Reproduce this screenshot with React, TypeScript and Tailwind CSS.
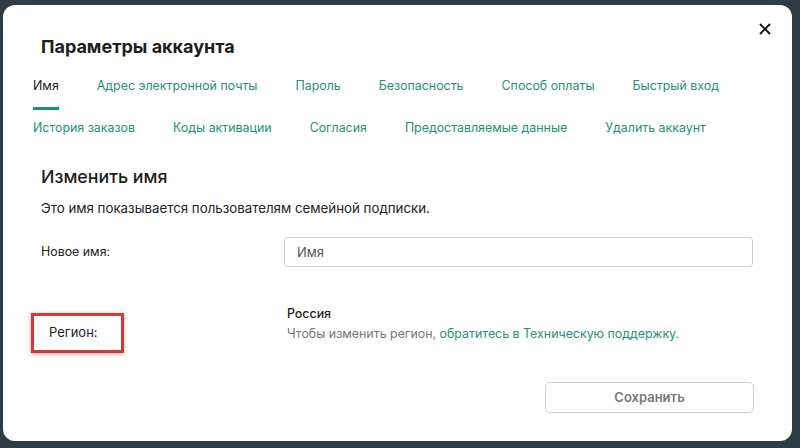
import { X } from "lucide-react";

const ROW_ONE = ["Имя", "Адрес электронной почты", "Пароль", "Безопасность", "Способ оплаты", "Быстрый вход"];
const ROW_TWO = ["История заказов", "Коды активации", "Согласия", "Предоставляемые данные", "Удалить аккаунт"];

function Tab({ label, active }: { label: string; active?: boolean }) {
  return (
    <div
      className={`border-b-[3px] pb-3 text-[12.4px] leading-[18px] ${
        active ? "border-[#1f9074] text-[#1d1d1b]" : "border-transparent text-[#1f9074]"
      }`}
    >
      {label}
    </div>
  );
}

export default function App() {
  return (
    <div className="h-[448px] w-[800px] bg-[#2e3c46] pl-[3px] pt-[5px] font-['Inter',sans-serif]">
      <div className="relative h-[436px] w-[789px] rounded-[12px] bg-white pl-[30px] pr-[38px]">
        <button className="absolute right-[18px] top-[15px] text-[#111]">
          <X size={18} strokeWidth={2.5} />
        </button>

        <h1 className="pl-[8px] pt-[30px] text-[18px] font-bold leading-[24px] text-[#1d1d1b]">
          Параметры аккаунта
        </h1>

        <div className="mt-[18px] flex gap-[38px]">
          {ROW_ONE.map((t, i) => (
            <Tab key={t} label={t} active={i === 0} />
          ))}
        </div>
        <div className="mt-[9px] flex gap-[38px]">
          {ROW_TWO.map((t) => (
            <Tab key={t} label={t} />
          ))}
        </div>

        <div className="pl-[8px]">
          <h2 className="mt-[12px] text-[17.8px] font-medium leading-[26px] text-[#1d1d1b]">Изменить имя</h2>
          <p className="mt-[9px] text-[13.3px] leading-[18px] text-[#222]">
            Это имя показывается пользователям семейной подписки.
          </p>

          <div className="mt-[20px] flex items-center">
            <div className="w-[243px] text-[12.4px] text-[#222]">Новое имя:</div>
            <input
              placeholder="Имя"
              className="h-[30px] w-[469px] rounded-[4px] border border-[#cfcfcf] px-[12px] text-[13px] text-[#333] outline-none placeholder:text-[#555]"
            />
          </div>

          <div className="mt-[46px] flex">
            <div className="w-[243px]">
              <div className="-ml-[10px] flex h-[40px] w-[93px] items-center border-[3px] border-[#d23a3a] pl-[15px] text-[13px] text-[#222] shadow-[0_1px_4px_rgba(0,0,0,0.35)]">
                Регион:
              </div>
            </div>
            <div className="-mt-[9px] pl-[3px] text-[12.4px] leading-[20px]">
              <div className="font-medium text-[#1d1d1b]">Россия</div>
              <div className="text-[#777]">
                Чтобы изменить регион, <span className="text-[#1f9074]">обратитесь в Техническую поддержку</span>.
              </div>
            </div>
          </div>

          <div className="mt-[29px] flex justify-end">
            <button className="h-[31px] w-[209px] rounded-[5px] border border-[#cfcfcf] text-[13px] font-semibold text-[#777]">
              Сохранить
            </button>
          </div>
        </div>
      </div>
    </div>
  );
}
